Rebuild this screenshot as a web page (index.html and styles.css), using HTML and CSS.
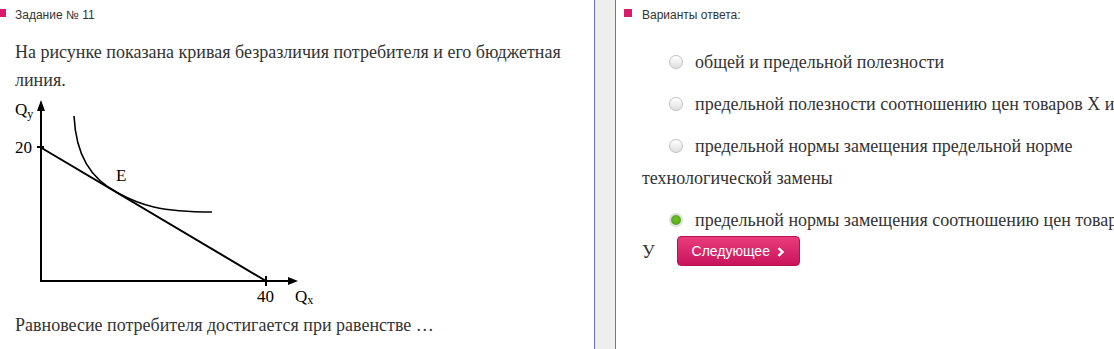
FILE: index.html
```html
<!DOCTYPE html>
<html lang="ru">
<head>
  <meta charset="UTF-8" />
  <title>Тест</title>
  <link rel="stylesheet" href="styles.css">
</head>
<body>
  <div class="page">
    <div class="task">
      <div class="caption">Задание № 11</div>
      <p class="question">На рисунке показана кривая безразличия потребителя и его бюджетная линия.</p>
      <svg class="graph" width="300" height="208" viewBox="15 98 300 208">
        <g stroke="#000" stroke-width="2" fill="none">
          <line x1="41" y1="282" x2="41" y2="108" />
          <line x1="40" y1="281" x2="291" y2="281" />
          <line x1="37" y1="147" x2="44" y2="147" />
          <line x1="266" y1="276" x2="266" y2="286" />
          <line x1="40" y1="147" x2="266" y2="281" />
          <path d="M74,116 C76,155 90,178.5 118,193 C140,205 160,212 212,212" stroke-width="1.6" />
        </g>
        <polygon points="41,100 37,111 45,111" fill="#000" />
        <polygon points="298,281 288,277 288,285" fill="#000" />
        <g class="label">
          <text x="15" y="115">Q<tspan class="sub" dy="3">y</tspan></text>
          <text x="15" y="153">20</text>
          <text x="116" y="181">E</text>
          <text x="257" y="302">40</text>
          <text x="295" y="302">Q<tspan class="sub" dy="2">x</tspan></text>
        </g>
      </svg>
      <p class="question">Равновесие потребителя достигается при равенстве …</p>
    </div>
    <div class="splitter"></div>
    <div class="answers">
      <div class="caption">Варианты ответа:</div>
      <div class="options">
        <p class="option"><span class="radio"></span>общей и предельной полезности</p>
        <p class="option"><span class="radio"></span>предельной полезности соотношению цен товаров X и У</p>
        <p class="option"><span class="radio"></span>предельной нормы замещения предельной норме технологической замены</p>
        <p class="option"><span class="radio checked"></span>предельной нормы замещения соотношению цен товаров X и У<button class="next">Следующее<svg class="chevron" width="8" height="10" viewBox="0 0 8 10"><path d="M1.5,1.2 L5.5,5 L1.5,8.8" stroke="#fff" stroke-width="2.4" fill="none" /></svg></button></p>
      </div>
    </div>
  </div>
</body>
</html>
```

FILE: styles.css
```css
body {
  margin: 0;
  background: #fff;
  color: #333;
  font-family: "Liberation Serif", "Times New Roman", serif;
  overflow: hidden;
}
.page {
  display: flex;
  height: 349px;
}
.task {
  width: 594px;
  flex-shrink: 0;
  padding-left: 15px;
  box-sizing: border-box;
}
.caption {
  font-family: "Liberation Sans", Arial, sans-serif;
  font-size: 12px;
  color: #333;
  line-height: 16px;
  padding-top: 7px;
  position: relative;
}
.caption::before {
  content: "";
  position: absolute;
  left: -18px;
  top: 9px;
  width: 8px;
  height: 8px;
  background: #d81b6a;
}
.task .caption::before { left: -16px; width: 7px; }
.question {
  margin: 15px 0 0;
  font-size: 18px;
  line-height: 28px;
  width: 570px;
}
.graph {
  display: block;
  margin: 4px 0 0;
}
.label text {
  font-family: "Liberation Serif", "Times New Roman", serif;
  font-size: 17px;
  fill: #000;
}
.label .sub { font-size: 12px; }
.task .graph + .question {
  margin-top: 5px;
}
.splitter {
  width: 20px;
  flex-shrink: 0;
  background: #eeeeee;
  border-left: 1px solid #6c70c9;
  border-right: 1px solid #6c70c9;
}
.answers {
  flex: 1;
  overflow: hidden;
  padding-left: 26px;
}
.options {
  width: 530px;
  margin-top: 23px;
}
.option {
  margin: 0 0 10px;
  font-size: 18px;
  line-height: 32px;
  text-indent: 27px;
}
.radio {
  display: inline-block;
  width: 14px;
  height: 14px;
  box-sizing: border-box;
  border-radius: 50%;
  border: 1px solid #c4c4c4;
  background: linear-gradient(#ffffff, #dedede);
  box-shadow: 0 0 1px rgba(0,0,0,0.15);
  vertical-align: -1px;
  margin-right: 12px;
}
.radio.checked {
  border: 2px solid #e2e2e2;
  background: radial-gradient(circle at 50% 40%, #6cc22a, #4a9a10);
}
.next {
  margin-left: 22px;
  width: 123px;
  height: 30px;
  padding: 0;
  border: 1px solid #b80f50;
  border-radius: 4px;
  background: linear-gradient(#ea3c7c, #c9145b);
  color: #fff;
  font-family: "Liberation Sans", Arial, sans-serif;
  font-size: 14px;
  text-indent: 0;
  vertical-align: 2px;
  cursor: pointer;
}
.chevron {
  margin-left: 7px;
  vertical-align: -1px;
}
```
